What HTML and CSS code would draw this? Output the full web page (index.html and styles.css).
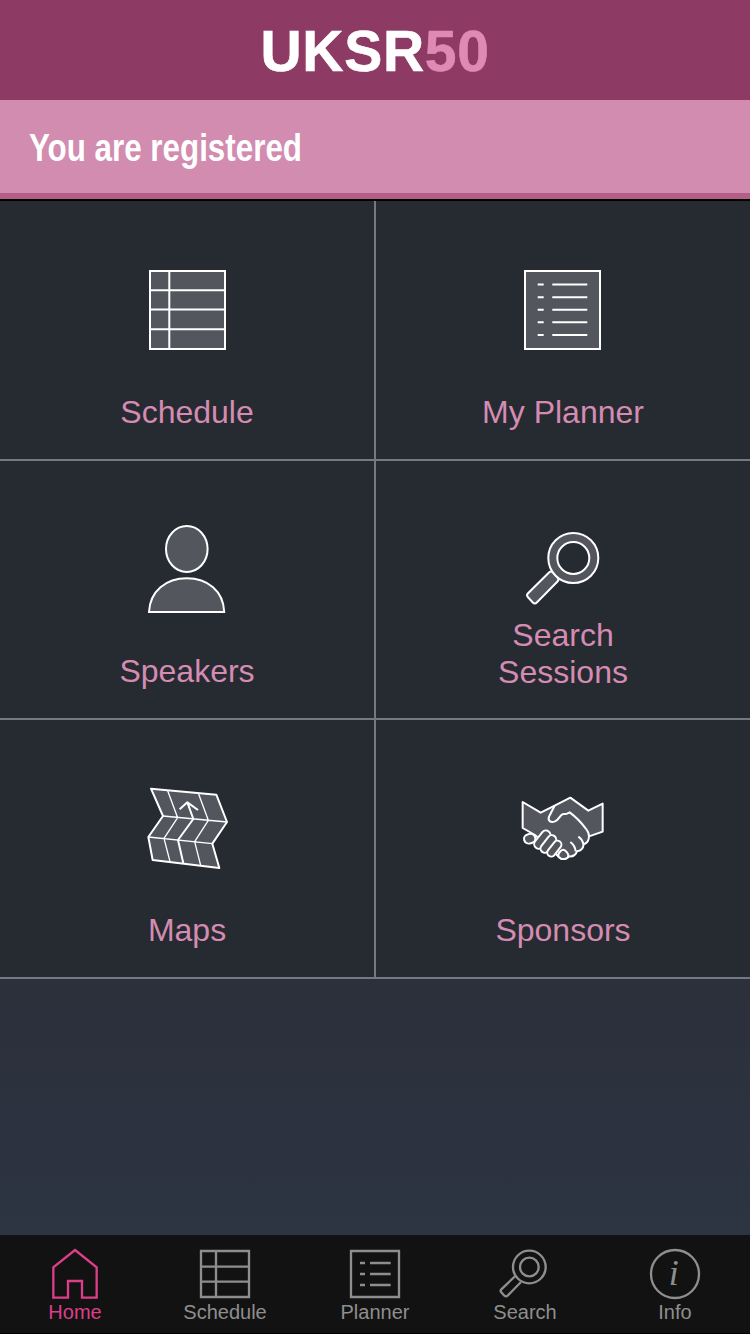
FILE: index.html
```
<!DOCTYPE html>
<html lang="en">
<head>
  <meta charset="UTF-8" />
  <title>UKSR50</title>
  <link rel="stylesheet" href="styles.css">
</head>
<body>

  <header class="header">UKSR<span class="header-accent">50</span></header>

  <div class="banner"><span class="banner-text">You are registered</span></div>

  <main class="menu">
    <a class="cell">
      <svg class="icon" viewBox="0 0 100 94">
        <rect class="fill" x="13" y="11" width="75" height="78" />
        <path d="M13 30.2H88M13 49.5H88M13 69.2H88M32.3 11V89" />
      </svg>
      <span class="label">Schedule</span>
    </a>

    <a class="cell">
      <svg class="icon" viewBox="0 0 100 94">
        <rect class="fill" x="12" y="11" width="75" height="78" />
        <path d="M24.7 24.5h6M39.3 24.5h35M24.7 37.3h6M39.3 37.3h35M24.7 49.7h6M39.3 49.7h35M24.7 62.3h6M39.3 62.3h35M24.7 75h6M39.3 75h35" />
      </svg>
      <span class="label">My Planner</span>
    </a>

    <a class="cell">
      <svg class="icon" viewBox="0 0 100 94">
        <ellipse class="fill" cx="49.8" cy="29" rx="20.8" ry="23" />
        <path class="fill" d="M12 92C13 71 29 58.3 49.8 58.3S86.500 71 87.200 92Z" />
      </svg>
      <span class="label">Speakers</span>
    </a>

    <a class="cell">
      <svg class="icon" viewBox="0 0 100 94">
        <path class="fill" d="M36 52.500L14.800 73.500Q13.200 75.200 14.800 77L19.800 82.500Q21.800 84.500 23.800 82.500L44.500 61.500Q46.500 59.500 44.500 57.500L40 52.500Q38 50.500 36 52.500Z" />
        <circle class="fill" cx="60.3" cy="38" r="25" />
        <circle class="hole" cx="60.3" cy="38" r="16" />
      </svg>
      <span class="label two-line">Search<br>Sessions</span>
    </a>

    <a class="cell">
      <svg class="icon icon-3x" viewBox="21 12 300 282">
        <path class="fill" d="M63 41L259 59L291 141L247 206L268 279L68 255L55 186L99 123Z" />
        <path class="thin" d="M99 123L291 141M55 186L247 206M113 47L143 128L102 190L120 260M205 55L235 136L194 200L212 271" />
        <path d="M172 82L190 132L144 195L160 265M149 103L172 82L204 105" />
      </svg>
      <span class="label">Maps</span>
    </a>

    <a class="cell">
      <svg class="icon icon-3x" viewBox="24 -3 300 282">
        <path class="fill" d="M53 66L107 98L149 77L196 53L250 92L293 71V155L252 169Q252 188 236 193Q234 211 216 214Q210 231 192 229Q184 240 168 236L90 165L53 144Z" />
        <path class="fill" d="M149 77Q138 98 132 110C127 124 139 129 150 124C162 120 163 108 172 103L186 101L194 97Q222 118 240 143Q252 156 252 170" />
        <path d="M196 186Q210 196 212 214M220 170Q233 179 235 193" />
        <rect class="fill" x="-17" y="-14" width="34" height="28" rx="14" transform="translate(74 176) rotate(-15)" />
        <rect class="fill" x="-31" y="-14" width="62" height="28" rx="14" transform="translate(112 179) rotate(-52)" />
        <rect class="fill" x="-30" y="-13" width="60" height="26" rx="13" transform="translate(130 192) rotate(-52)" />
        <rect class="fill" x="-27" y="-12" width="54" height="24" rx="12" transform="translate(148 206) rotate(-52)" />
        <path class="fill" d="M160 230Q158 221 167 213Q175 205 182 213Q194 224 188 232Q180 240 168 236Z" />
      </svg>
      <span class="label">Sponsors</span>
    </a>
  </main>

  <nav class="tabbar">
    <a class="tab active">
      <svg class="tab-icon" viewBox="135 66 180 162">
        <path d="M225 75L290 127V218H246V168H204V218H160V127Z" />
      </svg>
      <span>Home</span>
    </a>
    <a class="tab">
      <svg class="tab-icon" viewBox="585 66 180 162">
        <path d="M603 78H747V216H603ZM603 125H747M603 170H747M648 78V216" />
      </svg>
      <span>Schedule</span>
    </a>
    <a class="tab">
      <svg class="tab-icon" viewBox="1035 66 180 162">
        <path d="M1053 78H1197V216H1053ZM1080 114h15M1110 114h62M1080 147h15M1110 147h62M1080 180h15M1110 180h62" />
      </svg>
      <span>Planner</span>
    </a>
    <a class="tab">
      <svg class="tab-icon" viewBox="360 66 180 162">
        <circle cx="463" cy="126" r="49" />
        <circle cx="463" cy="126" r="28" />
        <path d="M421 153L379 193Q375 198 379 202L388 212Q393 216 398 212L438 171" />
      </svg>
      <span>Search</span>
    </a>
    <a class="tab">
      <svg class="tab-icon" viewBox="810 66 180 162">
        <circle cx="900" cy="147" r="72" />
        <text class="info-i" x="896" y="181">i</text>
      </svg>
      <span>Info</span>
    </a>
  </nav>

</body>
</html>
```
FILE: styles.css
```
* {
  box-sizing: border-box;
}

body {
  margin: 0;
  height: 1334px;
  display: flex;
  flex-direction: column;
  font-family: 'Liberation Sans', Arial, sans-serif;
  background: linear-gradient(#2b303b 979px, #2d3442 1235px);
}

.header {
  height: 100px;
  background-color: #8d3a64;
  color: white;
  font-size: 57px;
  font-weight: bold;
  line-height: 102px;
  letter-spacing: 0.7px;
  text-align: center;
  -webkit-text-stroke: 0.6px;
}

.header-accent {
  color: #df8ab5;
}

.banner {
  height: 101px;
  padding-left: 29px;
  background-color: #d28cb0;
  border-bottom: 2px solid #000;
  box-shadow: inset 0 -6px #b25e86;
  line-height: 97px;
}

/* condensed bold */
.banner-text {
  display: inline-block;
  font-size: 38px;
  font-weight: bold;
  color: white;
  transform: scaleX(0.825);
  transform-origin: left;
}

.menu {
  display: grid;
  grid-template-columns: 376px 374px;
  grid-template-rows: 260px 259px 259px;
}

.cell {
  display: flex;
  flex-direction: column;
  justify-content: space-between;
  align-items: center;
  padding: 59px 0 28px;
  background-color: #262a31;
  border-bottom: 2px solid #747982;
}

.cell:nth-child(odd) {
  border-right: 2px solid #747982;
}

.icon {
  width: 100px;
  height: 94px;
  fill: none;
  stroke: white;
  stroke-width: 2;
}

.icon-3x {
  stroke-width: 6;
  stroke-linejoin: round;
}

.icon .fill {
  fill: #53565d;
}

.icon .hole {
  fill: #262a31;
}

.icon .thin {
  stroke-width: 4;
}

.label {
  font-size: 32px;
  line-height: 37px;
  text-align: center;
  color: #d48cb2;
}

.two-line {
  margin-bottom: -1px;
}

.tabbar {
  display: flex;
  height: 99px;
  margin-top: auto;
  padding-top: 12px;
  background-color: #121212;
  border-bottom: 1px solid #000;
}

.tab {
  width: 150px;
  display: flex;
  flex-direction: column;
  align-items: center;
  font-size: 20px;
  line-height: 22px;
  color: #8e8e8e;
}

.tab.active {
  color: #dc3f87;
}

.tab-icon {
  width: 60px;
  height: 54px;
  fill: none;
  stroke: currentColor;
  stroke-width: 7;
}

.info-i {
  font-family: 'Liberation Serif', serif;
  font-size: 108px;
  font-style: italic;
  text-anchor: middle;
  fill: currentColor;
  stroke: none;
}
```
